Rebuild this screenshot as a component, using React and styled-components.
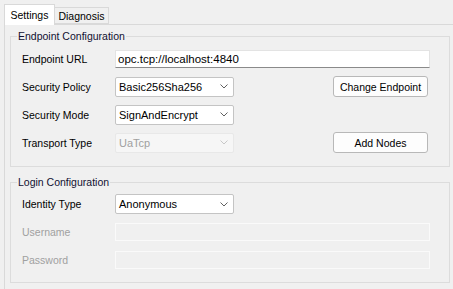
import React from 'react';
import styled, { createGlobalStyle } from 'styled-components';

const GlobalStyle = createGlobalStyle`
  html, body {
    margin: 0;
    padding: 0;
    background: #f0f0f0;
  }
  body {
    font-family: "Liberation Sans", Arial, sans-serif;
    font-size: 10.5px;
    color: #000;
  }
`;

const Window = styled.div`
  width: 453px;
  height: 289px;
  overflow: hidden;
  background: #f0f0f0;
  padding-top: 4px;
  box-sizing: border-box;
`;

const TabStrip = styled.div`
  display: flex;
  align-items: flex-end;
  height: 20px;
  margin-left: 4px;
`;

const Tab = styled.div`
  position: relative;
  z-index: ${p => (p.$active ? 2 : 1)};
  box-sizing: border-box;
  width: ${p => p.$w}px;
  height: ${p => (p.$active ? '21px' : '17px')};
  margin-bottom: ${p => (p.$active ? '-1px' : '0')};
  padding-bottom: ${p => (p.$active ? '1px' : '0')};
  display: flex;
  align-items: center;
  justify-content: center;
  background: ${p => (p.$active ? '#ffffff' : '#f0f0f0')};
  border: 1px solid #d9d9d9;
  border-bottom: ${p => (p.$active ? 'none' : '1px solid #d9d9d9')};
  border-left: ${p => (p.$active ? '1px solid #d9d9d9' : 'none')};
  font-size: 10.5px;
  color: #000;
`;

const Panel = styled.div`
  box-sizing: border-box;
  width: 470px;
  margin-left: 4px;
  border: 1px solid #d9d9d9;
  padding: 4px 5px 0 5px;
  height: 270px;
`;

const Group = styled.fieldset`
  box-sizing: border-box;
  width: 440px;
  margin: ${p => p.$top || 0}px 0 0 0;
  padding: 0;
  border: 1px solid #dcdcdc;
  min-width: 0;
`;

const Legend = styled.legend`
  margin-left: 6px;
  padding: 0 1px;
  font-size: 10.5px;
  line-height: 14px;
  color: #101030;
`;

const Body = styled.div`
  padding: ${p => p.$pt}px 20px 13px 11px;
`;

const Row = styled.div`
  display: flex;
  align-items: center;
  height: ${p => p.$h}px;
  margin-top: ${p => p.$gap || 0}px;
`;

const Label = styled.div`
  width: 93px;
  flex: none;
  color: ${p => (p.$disabled ? '#a0a0a0' : '#000')};
  white-space: nowrap;
`;

const TextBox = styled.div`
  box-sizing: border-box;
  flex: 1;
  height: 18px;
  display: flex;
  align-items: center;
  padding-left: 2px;
  background: ${p => (p.$disabled ? '#f0f0f0' : '#ffffff')};
  border: 1px solid ${p => (p.$disabled ? '#fafafa' : '#e3e3e3')};
  border-bottom-color: ${p => (p.$disabled ? '#fafafa' : '#8a8a8a')};
  margin-right: -1px;
  font-size: 11.5px;
`;

const Combo = styled.div`
  box-sizing: border-box;
  width: 119px;
  height: 20px;
  display: flex;
  align-items: center;
  justify-content: space-between;
  padding: 0 5px 0 3px;
  background: ${p => (p.$disabled ? '#f6f6f6' : '#ffffff')};
  border: 1px solid ${p => (p.$disabled ? '#e8e8e8' : '#c4c4c4')};
  border-radius: 2px;
  color: ${p => (p.$disabled ? '#a0a0a0' : '#000')};
  font-size: 11px;
`;

const Spacer = styled.div`
  flex: 1;
`;

const Button = styled.button`
  box-sizing: border-box;
  width: 95px;
  height: 21px;
  margin-right: 1px;
  padding: 0;
  font-family: "Liberation Sans", Arial, sans-serif;
  font-size: 10.5px;
  color: #000;
  background: #fdfdfd;
  border: 1px solid #b8b8b8;
  border-radius: 3px;
`;

const Chevron = ({ disabled }) => (
  <svg width="8" height="5" viewBox="0 0 8 5">
    <path
      d="M0.5 0.5 L4 4 L7.5 0.5"
      fill="none"
      stroke={disabled ? '#c8c8c8' : '#606060'}
      strokeWidth="1"
    />
  </svg>
);

const ComboBox = ({ value, disabled }) => (
  <Combo $disabled={disabled}>
    <span>{value}</span>
    <Chevron disabled={disabled} />
  </Combo>
);

export default function App() {
  return (
    <Window>
      <GlobalStyle />
      <TabStrip>
        <Tab $active $w={51}>Settings</Tab>
        <Tab $w={54}>Diagnosis</Tab>
      </TabStrip>
      <Panel>
        <Group>
          <Legend>Endpoint Configuration</Legend>
          <Body $pt={7}>
            <Row $h={18}>
              <Label>Endpoint URL</Label>
              <TextBox>opc.tcp://localhost:4840</TextBox>
            </Row>
            <Row $h={21} $gap={8}>
              <Label>Security Policy</Label>
              <ComboBox value="Basic256Sha256" />
              <Spacer />
              <Button>Change Endpoint</Button>
            </Row>
            <Row $h={21} $gap={7}>
              <Label>Security Mode</Label>
              <ComboBox value="SignAndEncrypt" />
            </Row>
            <Row $h={21} $gap={7}>
              <Label>Transport Type</Label>
              <ComboBox value="UaTcp" disabled />
              <Spacer />
              <Button>Add Nodes</Button>
            </Row>
          </Body>
        </Group>
        <Group $top={8}>
          <Legend>Login Configuration</Legend>
          <Body $pt={5}>
            <Row $h={20}>
              <Label>Identity Type</Label>
              <ComboBox value="Anonymous" />
            </Row>
            <Row $h={18} $gap={9}>
              <Label $disabled>Username</Label>
              <TextBox $disabled />
            </Row>
            <Row $h={18} $gap={10}>
              <Label $disabled>Password</Label>
              <TextBox $disabled />
            </Row>
          </Body>
        </Group>
      </Panel>
    </Window>
  );
}
